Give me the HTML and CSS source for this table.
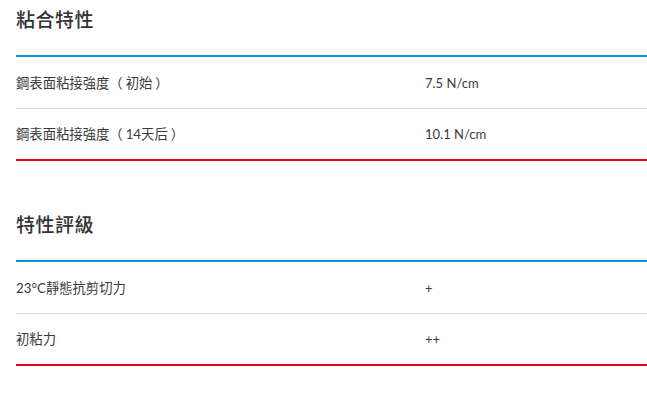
FILE: index.html
```html
<!DOCTYPE html>
<html lang="zh-Hant">
<head>
<meta charset="utf-8">
<link rel="stylesheet" href="styles.css">
</head>
<body>
<div class="page">
  <section class="spec">
    <h2 class="spec-title">粘合特性</h2>
    <div class="spec-table">
      <div class="spec-row">
        <div class="spec-name">鋼表面粘接強度<span class="fw fw-open">（</span>初始<span class="fw fw-close">）</span></div>
        <div class="spec-value">7.5 N/cm</div>
      </div>
      <div class="spec-row">
        <div class="spec-name">鋼表面粘接強度<span class="fw fw-open">（</span>14天后<span class="fw fw-close">）</span></div>
        <div class="spec-value">10.1 N/cm</div>
      </div>
    </div>
  </section>
  <section class="spec spec-next">
    <h2 class="spec-title">特性評級</h2>
    <div class="spec-table">
      <div class="spec-row">
        <div class="spec-name">23°C靜態抗剪切力</div>
        <div class="spec-value">+</div>
      </div>
      <div class="spec-row">
        <div class="spec-name">初粘力</div>
        <div class="spec-value">++</div>
      </div>
    </div>
  </section>
</div>
</body>
</html>
```

FILE: styles.css
```css
html, body {
  margin: 0;
  padding: 0;
  background: #fff;
}
body {
  font-family: Lato, "Noto Sans CJK TC", "Noto Sans", sans-serif;
  color: #333;
}
.page {
  padding-left: 16px;
}
.spec-title {
  margin: 0;
  padding: 6px 0 21px;
  font-size: 19px;
  line-height: 28px;
  font-weight: 500;
  color: #333;
  letter-spacing: 0.5px;
}
.spec-next {
  margin-top: 44px;
}
.spec-table {
  border-top: 2px solid #0098d6;
  border-bottom: 2px solid #e2001a;
  padding-top: 1px;
}
.spec-row {
  display: grid;
  grid-template-columns: 409px 1fr;
  align-items: center;
  height: 50px;
  font-size: 13px;
  color: #3a3a3a;
}
.spec-row + .spec-row {
  border-top: 1px solid #dcdcdc;
}
.spec-name {
  line-height: 20px;
  font-size: 13.33px;
}
.fw {
  display: inline-block;
  width: 1em;
  font-family: "Noto Sans CJK TC", sans-serif;
}
.fw-open {
  margin-right: 3px;
}
.fw-close {
  margin-left: 3px;
}
.spec-value {
  line-height: 20px;
}
```
